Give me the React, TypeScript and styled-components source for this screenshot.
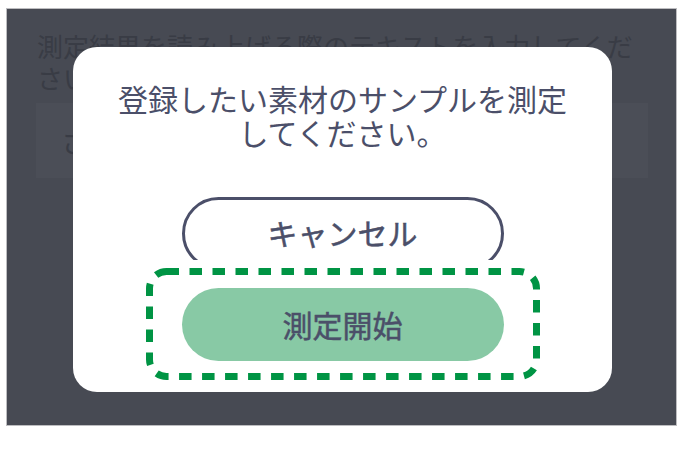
import React from 'react'
import styled, { createGlobalStyle } from 'styled-components'

const colors = {
  screen: '#474a53',
  field: '#4b4e57',
  dimText: '#393c45',
  ink: '#4b4f69',
  green: '#88c9a5',
  dash: '#009444',
}

const GlobalStyle = createGlobalStyle`
  body {
    margin: 0;
    background: #ffffff;
    font-family: "Noto Sans CJK JP", "Noto Sans", sans-serif;
  }
`

export default function App() {
  return (
    <>
      <GlobalStyle />
      <Page>
        <Screen>
          <Prompt>測定結果を読み上げる際のテキストを入力してください</Prompt>
          <Field>さんぷるテキスト</Field>
          <Overlay>
            <Modal>
              <Title>
                登録したい素材のサンプルを測定
                <br />
                してください。
              </Title>
              <Actions>
                <Button variant="outline">キャンセル</Button>
                <Highlight>
                  <DashFrame width="394" height="112" viewBox="0 0 394 112">
                    <rect
                      x="3.5"
                      y="3.5"
                      width="387"
                      height="105"
                      rx="17"
                      fill="none"
                      stroke={colors.dash}
                      strokeWidth="7"
                      strokeDasharray="12.5 10.5"
                    />
                  </DashFrame>
                  <Button variant="primary">測定開始</Button>
                </Highlight>
              </Actions>
            </Modal>
          </Overlay>
        </Screen>
      </Page>
    </>
  )
}

const Page = styled.div`
  padding: 8px 6px 29px;
`

const Screen = styled.div`
  position: relative;
  box-sizing: border-box;
  width: 671px;
  height: 418px;
  padding: 21px 28px 0 29px;
  background: ${colors.screen};
  border: 1px solid #bdbdc0;
  overflow: hidden;
`

const Prompt = styled.div`
  font-size: 26px;
  line-height: 32px;
  color: ${colors.dimText};
  padding-left: 1px;
`

const Field = styled.div`
  margin-top: 9px;
  height: 75px;
  display: flex;
  align-items: center;
  padding: 0 25px;
  background: ${colors.field};
  font-size: 28px;
  color: ${colors.dimText};
  white-space: nowrap;
`

const Overlay = styled.div`
  position: absolute;
  inset: 0;
  display: flex;
  justify-content: center;
  align-items: center;
  padding-top: 4px;
`

const Modal = styled.div`
  box-sizing: border-box;
  width: 539px;
  margin-left: 2px;
  padding: 34px 0 12px;
  background: #ffffff;
  border-radius: 24px;
  display: flex;
  flex-direction: column;
  align-items: center;
`

const Title = styled.div`
  font-size: 30px;
  line-height: 34px;
  color: ${colors.ink};
  text-align: center;
`

const Actions = styled.div`
  margin-top: 48px;
  display: flex;
  flex-direction: column;
  align-items: center;
`

const Button = styled.div<{ variant: 'outline' | 'primary' }>`
  box-sizing: border-box;
  width: 322px;
  height: 73px;
  border-radius: 37px;
  display: flex;
  align-items: center;
  justify-content: center;
  font-size: 30px;
  font-weight: 400;
  -webkit-text-stroke: 0.5px ${colors.ink};
  color: ${colors.ink};
  background: ${(p) => (p.variant === 'primary' ? colors.green : '#ffffff')};
  border: ${(p) => (p.variant === 'outline' ? `3px solid ${colors.ink}` : 'none')};
  padding-bottom: ${(p) => (p.variant === 'outline' ? '2px' : '0')};
`

const Highlight = styled.div`
  position: relative;
  margin-top: -10px;
  width: 394px;
  box-sizing: border-box;
  padding: 28px 36px 19px;
  background: #ffffff;
  display: flex;
  justify-content: center;
`

const DashFrame = styled.svg`
  position: absolute;
  top: 8px;
  left: 0;
`
